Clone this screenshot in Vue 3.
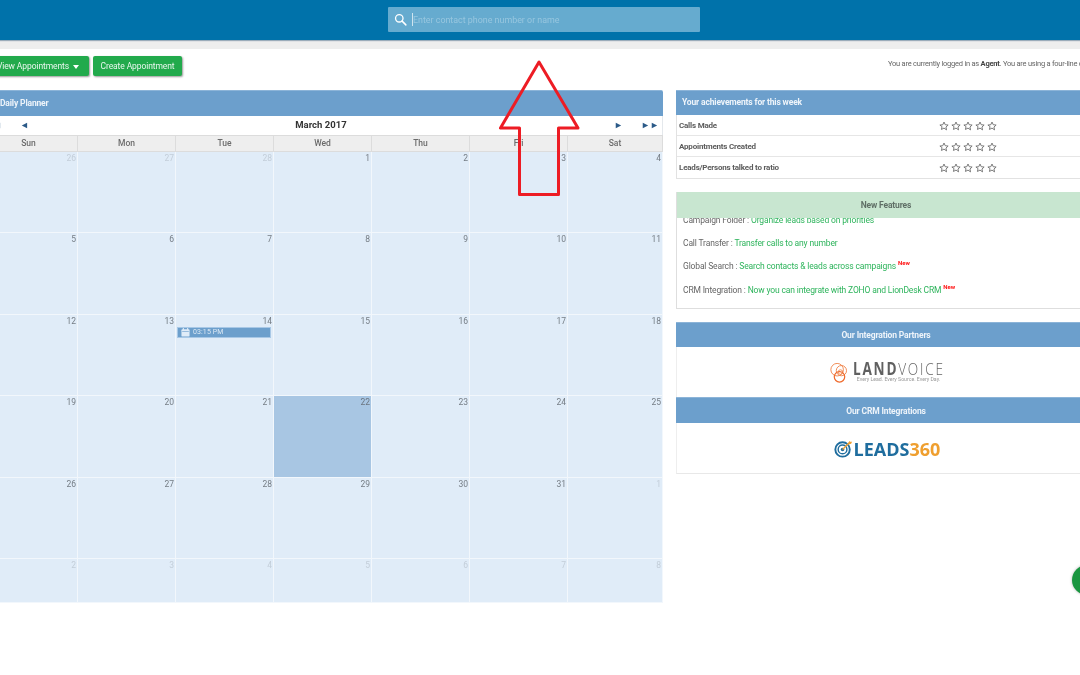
<script setup>
const names = ['Sun', 'Mon', 'Tue', 'Wed', 'Thu', 'Fri', 'Sat']
const seq = [
  [26, 1], [27, 1], [28, 1], [1, 0], [2, 0], [3, 0], [4, 0],
  [5, 0], [6, 0], [7, 0], [8, 0], [9, 0], [10, 0], [11, 0],
  [12, 0], [13, 0], [14, 0], [15, 0], [16, 0], [17, 0], [18, 0],
  [19, 0], [20, 0], [21, 0], [22, 0], [23, 0], [24, 0], [25, 0],
  [26, 0], [27, 0], [28, 0], [29, 0], [30, 0], [31, 0], [1, 1],
  [2, 1], [3, 1], [4, 1], [5, 1], [6, 1], [7, 1], [8, 1]
]
const cells = seq.map(([n, other], i) => ({ n, other, today: i === 24, event: i === 16, key: i }))
const achievements = ['Calls Made', 'Appointments Created', 'Leads/Persons talked to ratio']
const features = [
  { label: 'Campaign Folder', text: 'Organize leads based on priorities' },
  { label: 'Call Transfer', text: 'Transfer calls to any number' },
  { label: 'Global Search', text: 'Search contacts & leads across campaigns', isNew: true },
  { label: 'CRM Integration', text: 'Now you can integrate with ZOHO and LionDesk CRM', isNew: true }
]
</script>

<template>
  <div class="page">
    <header class="topbar">
      <div class="search">
        <svg class="search-icon" viewBox="0 0 16 16" width="13" height="13">
          <circle cx="6.500" cy="6.500" r="4.600" fill="none" stroke="#fff" stroke-width="1.600" />
          <path d="M10 10l4.600 4.600" stroke="#fff" stroke-width="1.800" stroke-linecap="round" />
        </svg>
        <span class="caret"></span>
        <span class="placeholder">Enter contact phone number or name</span>
      </div>
    </header>
    <div class="strip"></div>

    <div class="toolbar">
      <button class="btn btn-view">View Appointments <i class="down"></i></button>
      <button class="btn btn-create">Create Appointment</button>
      <div class="login">You are currently logged in as <b>Agent</b>. You are using a four-line calling plan</div>
    </div>

    <main class="columns">
      <section class="planner">
        <div class="panel-head planner-head">Daily Planner</div>
        <div class="nav">
          <span class="nav-left"><span class="nav-first">◄</span><span class="nav-prev">◄</span></span>
          <span class="month">March 2017</span>
          <span class="nav-right"><span class="nav-next">►</span><span class="nav-last">►►</span></span>
        </div>
        <div class="cal-grid names">
          <div v-for="d in names" :key="d" class="dayname">{{ d }}</div>
        </div>
        <div class="cal-grid days">
          <div
            v-for="c in cells"
            :key="c.key"
            class="cell"
            :class="{ other: c.other, today: c.today }"
          >
            <div class="num">{{ c.n }}</div>
            <div v-if="c.event" class="event">
              <svg viewBox="0 0 10 10" width="9" height="9">
                <rect x="0.500" y="1.500" width="9" height="8" rx="1" fill="#e0ecf8" />
                <rect x="2" y="0" width="1.200" height="2.500" fill="#e0ecf8" />
                <rect x="6.800" y="0" width="1.200" height="2.500" fill="#e0ecf8" />
                <rect x="1.300" y="3.600" width="7.400" height="0.700" fill="#6c9fcc" />
              </svg>
              <span>03:15 PM</span>
            </div>
          </div>
        </div>
      </section>

      <aside class="side">
        <section class="card achievements">
          <div class="panel-head ach-head">Your achievements for this week</div>
          <div v-for="a in achievements" :key="a" class="ach-row">
            <span class="ach-label">{{ a }}</span>
            <span class="stars">
              <svg v-for="s in 5" :key="s" viewBox="0 0 24 24" width="10" height="10">
                <path d="M12 2.500l2.900 6.400 7 .8-5.200 4.700 1.400 6.900L12 17l-6.100 3.300 1.400-6.900L2.100 9.700l7-.8z" fill="none" stroke="#707070" stroke-width="2.200" stroke-linejoin="round" />
              </svg>
            </span>
          </div>
        </section>

        <section class="card features">
          <div class="features-head">New Features</div>
          <div class="features-view">
            <p v-for="f in features" :key="f.label" class="feature">
              {{ f.label }} : <span class="green">{{ f.text }}</span>
              <sup v-if="f.isNew" class="new">New</sup>
            </p>
          </div>
        </section>

        <section class="card partners">
          <div class="panel-head center-head">Our Integration Partners</div>
          <div class="logo-box land-box">
            <svg class="land-icon" viewBox="0 0 20 24" width="19" height="23">
              <circle cx="7.500" cy="8" r="6.600" fill="none" stroke="#ef7a3c" stroke-width="0.900" />
              <circle cx="12" cy="9" r="5.400" fill="none" stroke="#ef7a3c" stroke-width="0.900" />
              <circle cx="10" cy="15.500" r="5.500" fill="none" stroke="#ef6a2c" stroke-width="1.300" />
              <circle cx="11" cy="10.500" r="2.400" fill="none" stroke="#ef7a3c" stroke-width="0.800" />
            </svg>
            <div class="land-words">
              <div class="land-name"><b>LAND</b>VOICE</div>
              <div class="land-tag">Every Lead. Every Source. Every Day.</div>
            </div>
          </div>
          <div class="panel-head center-head crm-head">Our CRM Integrations</div>
          <div class="logo-box leads-box">
            <svg viewBox="0 0 20 20" width="19" height="19">
              <circle cx="9" cy="11" r="7.600" fill="none" stroke="#1f6d9e" stroke-width="2" />
              <circle cx="9" cy="11" r="4.600" fill="none" stroke="#1f6d9e" stroke-width="1.500" />
              <circle cx="9" cy="11" r="1.900" fill="#1f6d9e" />
              <path d="M9 11l7-7" stroke="#ef9f2f" stroke-width="1.400" />
              <path d="M15 5l1-3 1 1 2 0-1 2-3 1z" fill="#ef9f2f" />
            </svg>
            <span class="leads-word">LEADS<em>360</em></span>
          </div>
        </section>
      </aside>
    </main>

    <svg class="arrow" viewBox="0 0 90 144" width="90" height="144">
      <path d="M45 4L6.500 70H25.500V136.500H64.500V70H84z" fill="none" stroke="#ed1c24" stroke-width="3" stroke-linejoin="round" />
    </svg>
    <div class="fab"></div>
  </div>
</template>

<style>
html, body { margin: 0; padding: 0; background: #fff; }
</style>

<style scoped>
.page {
  position: relative;
  width: 1080px;
  height: 675px;
  overflow: hidden;
  background: #fff;
  font-family: Roboto, "Liberation Sans", sans-serif;
  font-size: 8px;
  color: #555;
  filter: blur(0.35px);
}
.topbar {
  height: 40px;
  background: #0072aa;
  box-shadow: 0 1px 1px rgba(0, 50, 90, .35);
  display: flex;
  align-items: flex-start;
  padding: 7px 0 0 388px;
  box-sizing: border-box;
  position: relative;
}
.search {
  width: 312px;
  height: 25px;
  background: #66abcf;
  border-radius: 1px;
  display: flex;
  align-items: center;
}
.search-icon { margin-left: 6px; }
.caret { width: 1px; height: 13px; background: #cfe4ef; margin-left: 5px; }
.placeholder { font-size: 8.900px; color: #97c6df; }
.strip { height: 9px; background: #eeeeee; }
.toolbar {
  display: flex;
  align-items: flex-start;
  padding-top: 7px;
  height: 41px;
  box-sizing: border-box;
  margin-left: -12px;
}
.btn {
  flex: none;
  height: 20px;
  border: 0;
  padding: 0;
  background: #22aa4c;
  color: #e9f7ee;
  border-radius: 2px;
  font: 400 8.500px Roboto, sans-serif;
  letter-spacing: -.1px;
  box-shadow: 1px 1px 2px rgba(0, 0, 0, .4);
  white-space: nowrap;
}
.btn-view { width: 101px; text-align: right; padding-right: 10px; box-sizing: border-box; }
.btn-create { width: 89px; margin-left: 4px; }
.down {
  display: inline-block;
  width: 0;
  height: 0;
  margin-left: 2px;
  border: 3px solid transparent;
  border-top: 4px solid #fff;
  border-bottom: 0;
  vertical-align: 0;
}
.login {
  flex: none;
  margin-left: 706px;
  padding-top: 3px;
  font-size: 7.500px;
  letter-spacing: -.24px;
  line-height: 9px;
  color: #666;
  white-space: nowrap;
}
.login b { color: #444; }
.columns {
  display: flex;
  align-items: flex-start;
  margin-left: -20px;
  gap: 13px;
}
.planner { width: 683px; flex: none; }
.panel-head {
  background: #6c9fcc;
  color: #eef4fa;
  font-weight: 700;
  font-size: 8.500px;
  letter-spacing: -.15px;
  border-top: 1px solid #8cb4d8;
  box-sizing: border-box;
}
.planner-head {
  height: 26px;
  line-height: 24px;
  padding-left: 20px;
  border-radius: 2px 2px 0 0;
}
.nav {
  height: 19px;
  position: relative;
  display: flex;
  justify-content: center;
  align-items: center;
  color: #2b5a88;
  border-right: 1px solid #e4e8ec;
  box-sizing: border-box;
}
.nav-left, .nav-right { position: absolute; top: 3px; font-size: 9px; line-height: 12px; }
.nav-left { left: 0; width: 60px; }
.nav-first { position: absolute; left: 13px; }
.nav-prev { position: absolute; left: 40px; }
.nav-right { right: 0; width: 60px; height: 12px; }
.nav-next { position: absolute; left: 12px; }
.nav-last { position: absolute; left: 39px; white-space: nowrap; }
.month { font-size: 9.500px; font-weight: 700; color: #333; letter-spacing: .05px; position: relative; top: -1px; }
.cal-grid {
  display: grid;
  grid-template-columns: repeat(6, 98px) 95px;
}
.names { height: 17px; }
.dayname {
  background: #eeeeee;
  border: 1px solid #dcdcdc;
  border-left: 0;
  box-sizing: border-box;
  text-align: center;
  line-height: 15px;
  font-weight: 500;
  font-size: 8.500px;
  color: #6b6b6b;
}
.days { grid-template-rows: repeat(5, 81.400px) 44px; }
.cell {
  background: #e0ecf8;
  border-right: 1px solid #f2f7fc;
  border-bottom: 1px solid #f2f7fc;
  box-sizing: border-box;
  padding: 1px 1px 0;
  min-width: 0;
  overflow: hidden;
}
.num { text-align: right; font-size: 8.500px; line-height: 10px; color: #757d85; }
.other .num { color: #c3ced9; }
.today { background: #a8c6e3; }
.today .num { color: #6b7580; }
.event {
  margin: 1px 1px 0 0;
  height: 11px;
  background: #6c9fcc;
  border: 1px solid #a8c8e6;
  box-sizing: border-box;
  display: flex;
  align-items: center;
  color: #dbe8f4;
  font-size: 7px;
  letter-spacing: .1px;
  padding-left: 3px;
  gap: 3px;
}
.side { width: 420px; flex: none; }
.card { box-sizing: border-box; }
.achievements {
  border: 1px solid #e2e2e2;
  border-top: 0;
  border-right: 0;
  margin-bottom: 13px;
}
.ach-head { height: 25px; line-height: 22px; padding-left: 6px; margin-left: -1px; }
.ach-row {
  height: 21px;
  border-bottom: 1px solid #e6e6e6;
  box-sizing: border-box;
  display: flex;
  align-items: center;
  padding-left: 2px;
  font-weight: 700;
  font-size: 8px;
  letter-spacing: -.2px;
  color: #5c5c5c;
}
.ach-row:last-child { border-bottom: 0; }
.ach-label { width: 260px; }
.stars { display: flex; gap: 2px; margin-top: 1px; }
.features {
  border: 1px solid #dedede;
  border-top: 0;
  border-right: 0;
  height: 117px;
  margin-bottom: 13px;
  overflow: hidden;
}
.features-head {
  height: 26px;
  line-height: 26px;
  background: #c8e6d0;
  text-align: center;
  font-weight: 700;
  font-size: 8.500px;
  letter-spacing: -.15px;
  color: #5f6f66;
  margin-left: -1px;
  position: relative;
  z-index: 1;
  width: 420px;
}
.features-view { padding: 0 6px; margin-top: -6px; }
.feature {
  margin: 0;
  height: 23.200px;
  line-height: 10px;
  padding-top: 3px;
  box-sizing: border-box;
  font-size: 8.500px;
  letter-spacing: -.15px;
  color: #666;
  white-space: nowrap;
}
.green { color: #2eb45c; }
.new { color: #f11; font-size: 6px; font-weight: 700; line-height: 0; vertical-align: 4px; margin-left: 2px; letter-spacing: 0; }
.partners { border-bottom: 1px solid #e8e8e8; border-left: 1px solid #eee; }
.center-head {
  height: 25px;
  line-height: 24px;
  text-align: center;
  margin-left: -1px;
  width: 420px;
}
.crm-head { height: 26px; line-height: 26px; }
.logo-box {
  display: flex;
  justify-content: center;
  align-items: center;
  width: 420px;
  margin-left: -1px;
  box-sizing: border-box;
}
.land-box { height: 50px; gap: 4px; padding-left: 2px; }
.land-icon { margin-top: 2px; }
.land-words { display: flex; flex-direction: column; align-items: center; width: 91px; }
.land-name {
  width: 91px;
  transform: scaleX(.8);
  transform-origin: left center;
  font-family: "Open Sans", sans-serif;
  font-size: 17px;
  line-height: 15px;
  letter-spacing: 2.200px;
  font-weight: 300;
  color: #666;
  white-space: nowrap;
}
.land-name b { font-weight: 700; color: #606060; }
.land-tag { font-size: 5.200px; line-height: 7px; color: #999; white-space: nowrap; }
.leads-box { height: 50px; gap: 1px; padding-top: 1px; padding-left: 2px; }
.leads-word {
  font-family: "Open Sans", sans-serif;
  font-weight: 700;
  font-size: 18px;
  line-height: 20px;
  color: #1f6d9e;
}
.leads-word em { font-style: normal; color: #ef9f2f; }
.arrow { position: absolute; left: 494px; top: 58px; }
.fab {
  position: absolute;
  left: 1072px;
  top: 565px;
  width: 30px;
  height: 30px;
  border-radius: 50%;
  background: #1a9640;
  box-shadow: 0 0 3px rgba(0, 0, 0, .3);
}
</style>
